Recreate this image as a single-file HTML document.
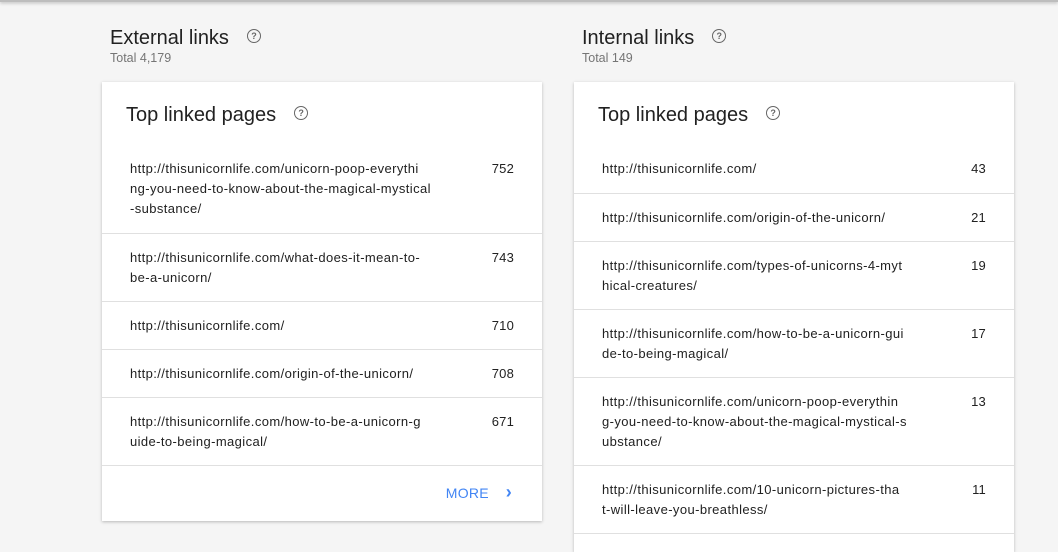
<!DOCTYPE html>
<html><head><style>
body{margin:0;width:1058px;height:533px;background:#f5f5f5;font-family:"Liberation Sans",sans-serif;position:relative;overflow:hidden}
.top{position:absolute;left:0;top:0;width:1058px;height:2px;background:#bdbdbd;box-shadow:0 1px 3px rgba(0,0,0,.3)}
.h{position:absolute;font-size:20px;color:#212121;line-height:24px}
.t{position:absolute;font-size:12.5px;color:#757575}
.q{display:inline-block;width:12px;height:12px;border:1.5px solid #666;border-radius:50%;font-size:9px;line-height:12px;text-align:center;color:#666;font-weight:bold;vertical-align:middle;margin-left:18px;position:relative;top:-3px}
.card{position:absolute;background:#fff;box-shadow:0 1px 3px rgba(0,0,0,.25)}
.ct{position:absolute;left:24px;top:21px;font-size:20px;color:#212121;line-height:24px}
.row{position:relative;border-bottom:1px solid #e0e0e0;padding:14px 28px 13px 28px;font-size:13px;letter-spacing:0.4px;line-height:20px;color:#212121}
.row span{position:absolute;right:28px;top:14px;letter-spacing:0.2px}
.row.f{padding-top:13px;padding-bottom:14px}
.row.f span{top:13px}
.more{position:absolute;right:30px;bottom:18px;color:#4285f4;font-size:14px;letter-spacing:.3px}
</style></head><body>
<div class="top"></div>
<div class="h" style="left:110px;top:26px">External links<span class="q">?</span></div>
<div class="t" style="left:110px;top:51px">Total 4,179</div>
<div class="h" style="left:582px;top:26px">Internal links<span class="q">?</span></div>
<div class="t" style="left:582px;top:51px">Total 149</div>

<div class="card" style="left:102px;top:82px;width:440px;height:439px">
<div class="ct">Top linked pages<span class="q">?</span></div>
<div style="position:absolute;top:64px;left:0;right:0">
<div class="row f">http://thisunicornlife.com/unicorn-poop-everythi<br>ng-you-need-to-know-about-the-magical-mystical<br>-substance/<span>752</span></div>
<div class="row">http://thisunicornlife.com/what-does-it-mean-to-<br>be-a-unicorn/<span>743</span></div>
<div class="row">http://thisunicornlife.com/<span>710</span></div>
<div class="row">http://thisunicornlife.com/origin-of-the-unicorn/<span>708</span></div>
<div class="row">http://thisunicornlife.com/how-to-be-a-unicorn-g<br>uide-to-being-magical/<span>671</span></div>
</div>
<div class="more">MORE &nbsp;&nbsp;&nbsp;<b style="font-size:18px">&#8250;</b></div>
</div>

<div class="card" style="left:574px;top:82px;width:440px;height:470px">
<div class="ct">Top linked pages<span class="q">?</span></div>
<div style="position:absolute;top:64px;left:0;right:0">
<div class="row f">http://thisunicornlife.com/<span>43</span></div>
<div class="row">http://thisunicornlife.com/origin-of-the-unicorn/<span>21</span></div>
<div class="row">http://thisunicornlife.com/types-of-unicorns-4-myt<br>hical-creatures/<span>19</span></div>
<div class="row">http://thisunicornlife.com/how-to-be-a-unicorn-gui<br>de-to-being-magical/<span>17</span></div>
<div class="row">http://thisunicornlife.com/unicorn-poop-everythin<br>g-you-need-to-know-about-the-magical-mystical-s<br>ubstance/<span>13</span></div>
<div class="row">http://thisunicornlife.com/10-unicorn-pictures-tha<br>t-will-leave-you-breathless/<span>11</span></div>
</div>
</div>
</body></html>
